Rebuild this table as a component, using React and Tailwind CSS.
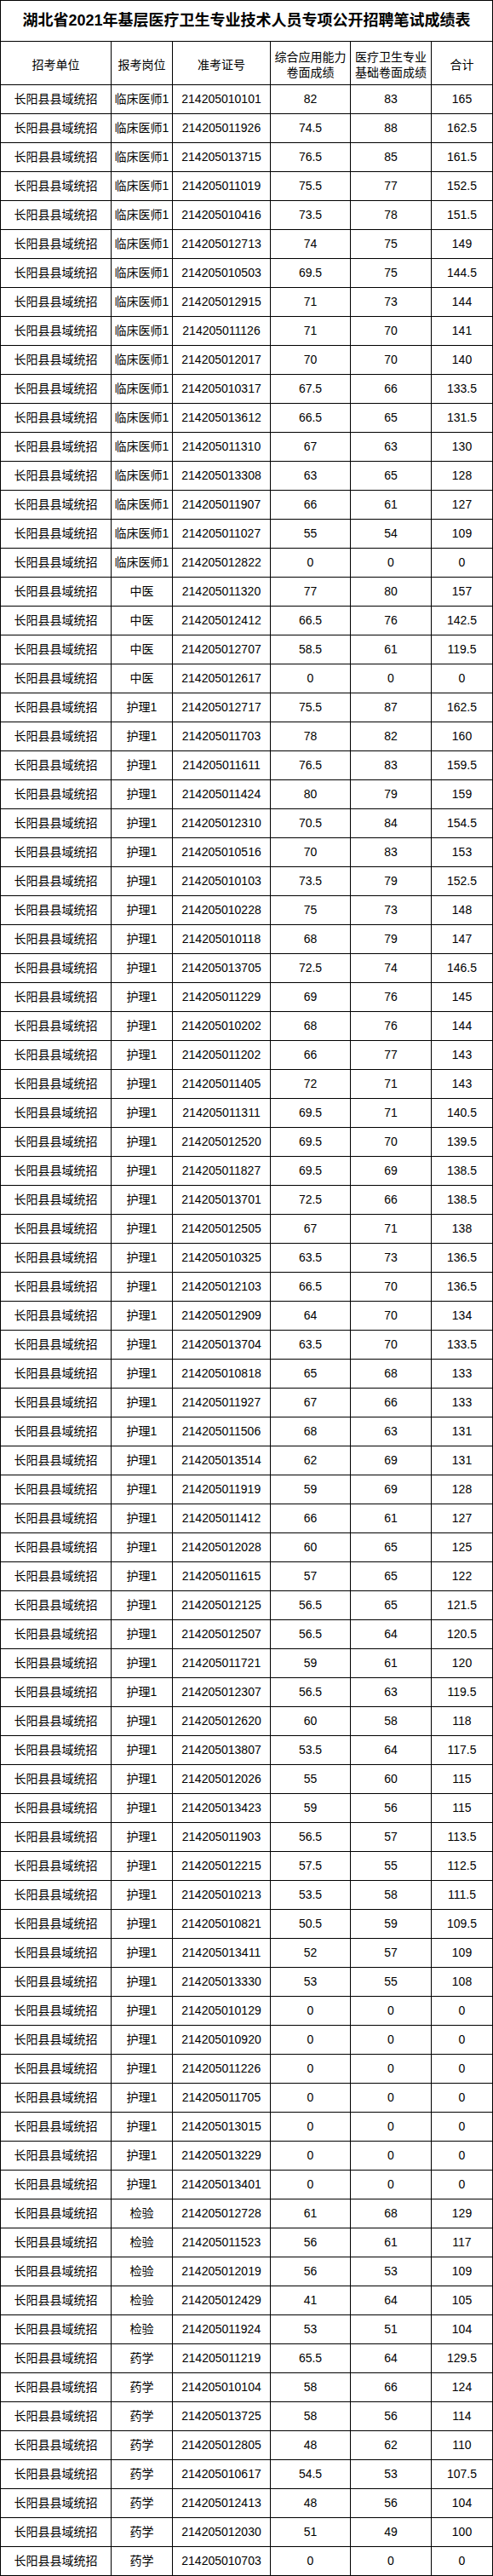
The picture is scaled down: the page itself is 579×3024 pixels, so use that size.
import React from "react";

const RAW = `临床医师1|214205010101|82|83|165
临床医师1|214205011926|74.5|88|162.5
临床医师1|214205013715|76.5|85|161.5
临床医师1|214205011019|75.5|77|152.5
临床医师1|214205010416|73.5|78|151.5
临床医师1|214205012713|74|75|149
临床医师1|214205010503|69.5|75|144.5
临床医师1|214205012915|71|73|144
临床医师1|214205011126|71|70|141
临床医师1|214205012017|70|70|140
临床医师1|214205010317|67.5|66|133.5
临床医师1|214205013612|66.5|65|131.5
临床医师1|214205011310|67|63|130
临床医师1|214205013308|63|65|128
临床医师1|214205011907|66|61|127
临床医师1|214205011027|55|54|109
临床医师1|214205012822|0|0|0
中医|214205011320|77|80|157
中医|214205012412|66.5|76|142.5
中医|214205012707|58.5|61|119.5
中医|214205012617|0|0|0
护理1|214205012717|75.5|87|162.5
护理1|214205011703|78|82|160
护理1|214205011611|76.5|83|159.5
护理1|214205011424|80|79|159
护理1|214205012310|70.5|84|154.5
护理1|214205010516|70|83|153
护理1|214205010103|73.5|79|152.5
护理1|214205010228|75|73|148
护理1|214205010118|68|79|147
护理1|214205013705|72.5|74|146.5
护理1|214205011229|69|76|145
护理1|214205010202|68|76|144
护理1|214205011202|66|77|143
护理1|214205011405|72|71|143
护理1|214205011311|69.5|71|140.5
护理1|214205012520|69.5|70|139.5
护理1|214205011827|69.5|69|138.5
护理1|214205013701|72.5|66|138.5
护理1|214205012505|67|71|138
护理1|214205010325|63.5|73|136.5
护理1|214205012103|66.5|70|136.5
护理1|214205012909|64|70|134
护理1|214205013704|63.5|70|133.5
护理1|214205010818|65|68|133
护理1|214205011927|67|66|133
护理1|214205011506|68|63|131
护理1|214205013514|62|69|131
护理1|214205011919|59|69|128
护理1|214205011412|66|61|127
护理1|214205012028|60|65|125
护理1|214205011615|57|65|122
护理1|214205012125|56.5|65|121.5
护理1|214205012507|56.5|64|120.5
护理1|214205011721|59|61|120
护理1|214205012307|56.5|63|119.5
护理1|214205012620|60|58|118
护理1|214205013807|53.5|64|117.5
护理1|214205012026|55|60|115
护理1|214205013423|59|56|115
护理1|214205011903|56.5|57|113.5
护理1|214205012215|57.5|55|112.5
护理1|214205010213|53.5|58|111.5
护理1|214205010821|50.5|59|109.5
护理1|214205013411|52|57|109
护理1|214205013330|53|55|108
护理1|214205010129|0|0|0
护理1|214205010920|0|0|0
护理1|214205011226|0|0|0
护理1|214205011705|0|0|0
护理1|214205013015|0|0|0
护理1|214205013229|0|0|0
护理1|214205013401|0|0|0
检验|214205012728|61|68|129
检验|214205011523|56|61|117
检验|214205012019|56|53|109
检验|214205012429|41|64|105
检验|214205011924|53|51|104
药学|214205011219|65.5|64|129.5
药学|214205010104|58|66|124
药学|214205013725|58|56|114
药学|214205012805|48|62|110
药学|214205010617|54.5|53|107.5
药学|214205012413|48|56|104
药学|214205012030|51|49|100
药学|214205010703|0|0|0`;

const ROWS = RAW.split("\n").map((l) => ["长阳县县域统招", ...l.split("|")]);

const cell =
  "h-[34px] border-r border-b border-black flex items-center justify-center whitespace-nowrap";
const head =
  "h-[51px] border-r border-b border-black flex items-center justify-center text-center leading-[18px] pt-[4px]";

export default function App() {
  return (
    <div className="w-[579px] bg-white text-black font-[family-name:Liberation_Sans,Noto_Sans_CJK_SC,sans-serif] text-[14px]">
      <div className="grid grid-cols-[130px_72px_115px_94px_95px_72px] border-l border-t border-black">
        <div className="col-span-6 h-[48px] border-r border-b border-black flex items-center justify-center text-[18px] font-bold whitespace-nowrap">
          湖北省2021年基层医疗卫生专业技术人员专项公开招聘笔试成绩表
        </div>
        <div className={head}>招考单位</div>
        <div className={head}>报考岗位</div>
        <div className={head}>准考证号</div>
        <div className={head}>
          综合应用能力
          <br />
          卷面成绩
        </div>
        <div className={head}>
          医疗卫生专业
          <br />
          基础卷面成绩
        </div>
        <div className={head}>合计</div>
        {ROWS.map((r, i) => (
          <React.Fragment key={i}>
            {r.map((v, j) => (
              <div key={j} className={cell}>
                {v}
              </div>
            ))}
          </React.Fragment>
        ))}
      </div>
    </div>
  );
}
